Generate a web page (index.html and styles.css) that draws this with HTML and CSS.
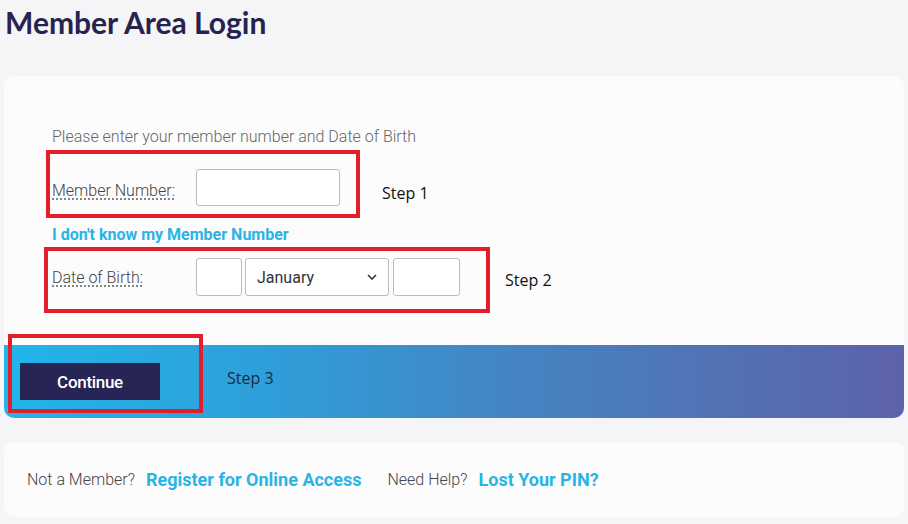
FILE: index.html
```html
<!DOCTYPE html>
<html lang="en">
<head>
  <meta charset="UTF-8" />
  <meta name="viewport" content="width=device-width, initial-scale=1.0"/>
  <title>Member Area Login</title>
  <link rel="stylesheet" href="styles.css">
</head>
<body>
  <h1 class="page-title">Member Area Login</h1>

  <div class="login-card">
    <div class="login-body">
      <p class="intro">Please enter your member number and Date of Birth</p>

      <div class="form-row row-member">
        <abbr class="field-label" title="Member Number">Member Number:</abbr>
        <input type="text" class="input member-input" />
        <span class="step step-1">Step 1</span>
        <div class="mark mark-1"></div>
      </div>

      <a href="#" class="forgot-link">I don't know my Member Number</a>

      <div class="form-row row-dob">
        <abbr class="field-label" title="Date of Birth">Date of Birth:</abbr>
        <input type="text" class="input day-input" />
        <div class="select-wrap">
          <select class="input month-select">
            <option>January</option>
            <option>February</option>
            <option>March</option>
          </select>
          <svg class="chevron" width="10" height="6" viewBox="0 0 10 6">
            <path d="M1 1l4 4 4-4" fill="none" stroke="#333" stroke-width="1.6"/>
          </svg>
        </div>
        <input type="text" class="input year-input" />
        <span class="step step-2">Step 2</span>
        <div class="mark mark-2"></div>
      </div>
    </div>

    <div class="action-bar">
      <button class="continue-btn">Continue</button>
      <span class="step step-3">Step 3</span>
      <div class="mark mark-3"></div>
    </div>
  </div>

  <div class="help-card">
    <span class="muted">Not a Member?</span>
    <a href="#" class="help-link">Register for Online Access</a>
    <span class="muted">Need Help?</span>
    <a href="#" class="help-link">Lost Your PIN?</a>
  </div>
</body>
</html>
```

FILE: styles.css
```css
body {
  margin: 0;
  font-family: Roboto, 'Liberation Sans', sans-serif;
  background-color: #f5f4f6;
  color: #555;
}

.page-title {
  margin: 0;
  padding: 4px 5px 0;
  height: 72px;
  box-sizing: border-box;
  font-family: Lato, 'Open Sans', sans-serif;
  font-weight: 700;
  font-size: 30px;
  line-height: 36px;
  color: #27234f;
}

.login-card {
  margin: 4px 4px 0;
  background-color: #fdfcfd;
  border-radius: 10px;
}

.login-body {
  padding: 49px 0 49px 48px;
}

.intro {
  margin: 0 0 20px;
  font-weight: 300;
  font-size: 16px;
  line-height: 24px;
  color: #666;
}

.form-row {
  position: relative;
  display: flex;
  align-items: center;
}

.field-label {
  width: 144px;
  font-weight: 300;
  font-size: 16px;
  color: #444;
  text-decoration: underline dotted #666;
  text-underline-offset: 3px;
}

.row-member .field-label {
  margin-top: 6px;
}

.input {
  box-sizing: border-box;
  height: 38px;
  border: 1px solid #bdbdbd;
  border-radius: 3px;
  background-color: #fff;
  font-family: Roboto, sans-serif;
  font-size: 16px;
}

.member-input {
  width: 144px;
  height: 37px;
}

.day-input {
  width: 46px;
}

.select-wrap {
  position: relative;
  margin-left: 3px;
}

.month-select {
  width: 144px;
  padding-left: 11px;
  appearance: none;
  color: #333;
}

.chevron {
  position: absolute;
  right: 12px;
  top: 16px;
  pointer-events: none;
}

.year-input {
  width: 67px;
  margin-left: 4px;
}

.step {
  font-family: 'Open Sans', 'Liberation Sans', sans-serif;
  font-size: 16px;
  color: #111;
}

.step-1 {
  margin: 10px 0 0 42px;
}

.step-2 {
  margin: 6px 0 0 45px;
}

.forgot-link {
  display: block;
  margin: 19px 0 13px;
  font-weight: 700;
  font-size: 16px;
  line-height: 20px;
  color: #29b4e4;
  text-decoration: none;
}

.mark {
  position: absolute;
  border: 4px solid #e31e2c;
  box-sizing: border-box;
}

.mark-1 {
  left: -6px;
  top: -19px;
  width: 314px;
  height: 68px;
}

.mark-2 {
  left: -8px;
  top: -11px;
  width: 446px;
  height: 66px;
}

.action-bar {
  position: relative;
  display: flex;
  align-items: center;
  height: 73px;
  padding-left: 16px;
  border-radius: 0 0 10px 10px;
  background: linear-gradient(90deg, #22b5ea 0%, #2f9ed8 30%, #4781c0 60%, #5d62aa 100%);
}

.continue-btn {
  width: 140px;
  height: 37px;
  border: none;
  background-color: #272456;
  color: #fff;
  font-family: Roboto, sans-serif;
  font-weight: 500;
  font-size: 17px;
  letter-spacing: -0.3px;
  cursor: pointer;
}

.step-3 {
  margin: 0 0 7px 67px;
  color: #1d2a3c;
}

.mark-3 {
  left: 4px;
  top: -11px;
  width: 195px;
  height: 79px;
}

.help-card {
  display: flex;
  align-items: center;
  height: 75px;
  margin: 24px 4px 0;
  padding-left: 23px;
  background-color: #fdfcfd;
  border-radius: 10px;
}

.muted {
  font-weight: 300;
  font-size: 16px;
  color: #444;
}

.help-link {
  margin: 0 26px 0 11px;
  font-weight: 700;
  font-size: 18px;
  color: #29b4e4;
  text-decoration: none;
}
```
